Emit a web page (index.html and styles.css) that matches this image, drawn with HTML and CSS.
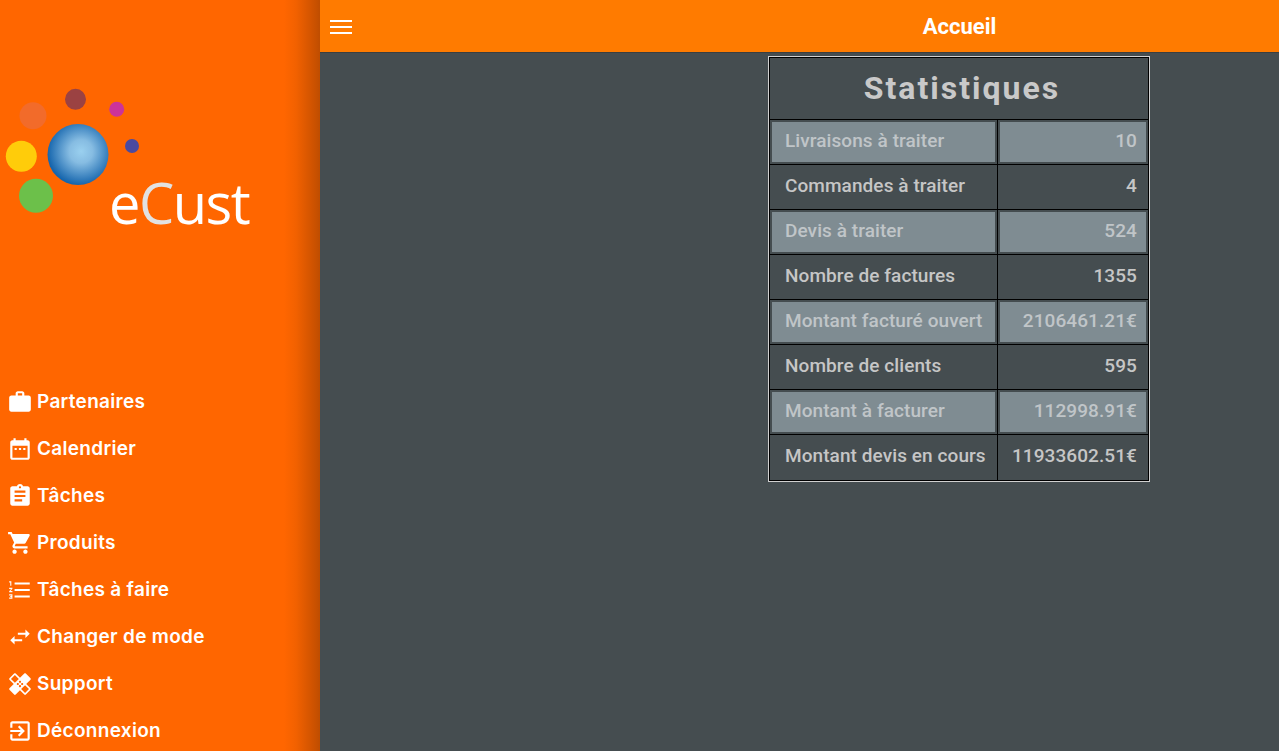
FILE: index.html
```html
<!DOCTYPE html>
<html lang="fr">
<head>
    <meta charset="UTF-8">
    <meta name="viewport" content="width=device-width, initial-scale=1.0">
    <title>eCust - Accueil</title>
    <link rel="stylesheet" href="styles.css">
</head>
<body>
    <aside class="sidebar">
        <div class="logo-wrap">
            <svg class="logo" width="320" height="377" viewBox="0 0 320 377">
                <defs>
                    <radialGradient id="ball" cx="0.55" cy="0.45" r="0.55">
                        <stop offset="0" stop-color="#9ad0ef"/>
                        <stop offset="0.35" stop-color="#86bce2"/>
                        <stop offset="1" stop-color="#1565ad"/>
                    </radialGradient>
                </defs>
                <circle cx="33" cy="115.7" r="13.5" fill="#f26b2a"/>
                <circle cx="75.5" cy="99.3" r="10.5" fill="#9b4242"/>
                <circle cx="116.7" cy="109.3" r="7.5" fill="#cc3399"/>
                <circle cx="132" cy="146" r="7" fill="#4a4aa0"/>
                <circle cx="78" cy="154.5" r="30.5" fill="url(#ball)"/>
                <circle cx="21.3" cy="156.3" r="15.5" fill="#ffcc0a"/>
                <circle cx="36" cy="195.7" r="17" fill="#6cc04a"/>
                <text class="logo-text" x="109" y="224">e<tspan class="logo-c">C</tspan>ust</text>
            </svg>
        </div>
        <nav class="menu">
            <a class="menu-item" href="#">
                <svg class="menu-icon" viewBox="0 0 24 24"><path d="M20 6h-4V4c0-1.11-.89-2-2-2h-4c-1.11 0-2 .89-2 2v2H4c-1.11 0-1.99.89-1.99 2L2 19c0 1.11.89 2 2 2h16c1.11 0 2-.89 2-2V8c0-1.11-.89-2-2-2zm-6 0h-4V4h4v2z"/></svg>
                Partenaires
            </a>
            <a class="menu-item" href="#">
                <svg class="menu-icon" viewBox="0 0 24 24"><path d="M9 11H7v2h2v-2zm4 0h-2v2h2v-2zm4 0h-2v2h2v-2zm2-7h-1V2h-2v2H8V2H6v2H5c-1.11 0-1.99.9-1.99 2L3 20c0 1.1.89 2 2 2h14c1.1 0 2-.9 2-2V6c0-1.1-.9-2-2-2zm0 16H5V9h14v11z"/></svg>
                Calendrier
            </a>
            <a class="menu-item" href="#">
                <svg class="menu-icon" viewBox="0 0 24 24"><path d="M19 3h-4.18C14.4 1.84 13.3 1 12 1c-1.3 0-2.4.84-2.82 2H5c-1.1 0-2 .9-2 2v14c0 1.1.9 2 2 2h14c1.1 0 2-.9 2-2V5c0-1.1-.9-2-2-2zm-7 0c.55 0 1 .45 1 1s-.45 1-1 1-1-.45-1-1 .45-1 1-1zm2 14H7v-2h7v2zm3-4H7v-2h10v2zm0-4H7V7h10v2z"/></svg>
                Tâches
            </a>
            <a class="menu-item" href="#">
                <svg class="menu-icon" viewBox="0 0 24 24"><path d="M7 18c-1.1 0-1.99.9-1.99 2S5.9 22 7 22s2-.9 2-2-.9-2-2-2zM1 2v2h2l3.6 7.59-1.35 2.45c-.16.28-.25.61-.25.96 0 1.1.9 2 2 2h12v-2H7.42c-.14 0-.25-.11-.25-.25l.03-.12.9-1.83h7.45c.75 0 1.41-.41 1.75-1.03l3.58-6.49c.08-.14.12-.31.12-.48 0-.55-.45-1-1-1H5.21l-.94-2H1zm16 16c-1.1 0-1.99.9-1.99 2s.89 2 1.99 2 2-.9 2-2-.9-2-2-2z"/></svg>
                Produits
            </a>
            <a class="menu-item" href="#">
                <svg class="menu-icon" viewBox="0 0 24 24"><path d="M2 17h2v.5H3v1h1v.5H2v1h3v-4H2v1zm1-9h1V4H2v1h1v3zm-1 3h1.8L2 13.1v.9h3v-1H3.2L5 10.9V10H2v1zm5-6v2h14V5H7zm0 14h14v-2H7v2zm0-6h14v-2H7v2z"/></svg>
                Tâches à faire
            </a>
            <a class="menu-item" href="#">
                <svg class="menu-icon" viewBox="0 0 24 24"><path d="M6.99 11L3 15l3.99 4v-3H14v-2H6.99v-3zM21 9l-4-4v3h-7v2h7v3l4-4z"/></svg>
                Changer de mode
            </a>
            <a class="menu-item" href="#">
                <svg class="menu-icon" viewBox="0 0 24 24"><path d="M17.73 12.02l3.98-3.98c.39-.39.39-1.02 0-1.41l-4.34-4.34c-.39-.39-1.02-.39-1.41 0l-3.98 3.98L8 2.29C7.8 2.1 7.55 2 7.29 2c-.25 0-.51.1-.7.29L2.25 6.63c-.39.39-.39 1.02 0 1.41l3.98 3.98L2.25 16c-.39.39-.39 1.02 0 1.41l4.34 4.34c.39.39 1.02.39 1.41 0l3.98-3.98 3.98 3.98c.2.2.45.29.71.29.26 0 .51-.1.71-.29l4.34-4.34c.39-.39.39-1.02 0-1.41l-3.99-3.98zM12 9c.55 0 1 .45 1 1s-.45 1-1 1-1-.45-1-1 .45-1 1-1zm-4.71 1.96L3.66 7.34l3.63-3.63 3.62 3.62-3.62 3.63zM10 13c-.55 0-1-.45-1-1s.45-1 1-1 1 .45 1 1-.45 1-1 1zm2 2c-.55 0-1-.45-1-1s.45-1 1-1 1 .45 1 1-.45 1-1 1zm2-4c.55 0 1 .45 1 1s-.45 1-1 1-1-.45-1-1 .45-1 1-1zm2.66 9.34l-3.63-3.62 3.63-3.63 3.62 3.62-3.62 3.63z"/></svg>
                Support
            </a>
            <a class="menu-item" href="#">
                <svg class="menu-icon" viewBox="0 0 24 24"><path d="M10.09 15.59L11.5 17l5-5-5-5-1.41 1.41L12.67 11H3v2h9.67l-2.58 2.59zM19 3H5c-1.11 0-2 .9-2 2v4h2V5h14v14H5v-4H3v4c0 1.1.89 2 2 2h14c1.1 0 2-.9 2-2V5c0-1.1-.9-2-2-2z"/></svg>
                Déconnexion
            </a>
        </nav>
    </aside>

    <div class="page">
        <header class="topbar">
            <button class="burger" aria-label="Menu">
                <span></span><span></span><span></span>
            </button>
            <h1>Accueil</h1>
        </header>
        <main class="content">
            <table class="stats">
                <caption>Statistiques</caption>
                <tr class="odd"><td class="label">Livraisons à traiter</td><td>10</td></tr>
                <tr><td class="label">Commandes à traiter</td><td>4</td></tr>
                <tr class="odd"><td class="label">Devis à traiter</td><td>524</td></tr>
                <tr><td class="label">Nombre de factures</td><td>1355</td></tr>
                <tr class="odd"><td class="label">Montant facturé ouvert</td><td>2106461.21€</td></tr>
                <tr><td class="label">Nombre de clients</td><td>595</td></tr>
                <tr class="odd"><td class="label">Montant à facturer</td><td>112998.91€</td></tr>
                <tr class="last"><td class="label">Montant devis en cours</td><td>11933602.51€</td></tr>
            </table>
        </main>
    </div>
</body>
</html>
```

FILE: styles.css
```css
html, body {
    height: 100%;
}

body {
    margin: 0;
    display: flex;
    overflow: hidden;
    background: #454d50;
    font-family: Roboto, Arial, sans-serif;
}

.sidebar {
    width: 320px;
    flex: none;
    height: 100vh;
    overflow: hidden;
    background: linear-gradient(90deg, #ff6600 0, #ff6600 284px, #f26100 296px, #d95700 308px, #bf4d00 320px);
}

.logo-wrap {
    height: 378px;
}

.logo {
    display: block;
}

.logo-text {
    font-family: "Open Sans", sans-serif;
    font-weight: 400;
    font-size: 56px;
    letter-spacing: -1.5px;
    fill: #fff;
}

.logo-c {
    fill: #e2e2e2;
}

.menu-item {
    display: flex;
    align-items: center;
    gap: 4px;
    height: 47px;
    padding-left: 7px;
    color: #fff;
    text-decoration: none;
    font-family: Inter, Arial, sans-serif;
    font-size: 19px;
    font-weight: 600;
    letter-spacing: 0.3px;
}

.menu-icon {
    width: 26px;
    height: 26px;
    fill: #fff;
    flex: none;
}

.page {
    flex: 1;
    min-width: 0;
}

.topbar {
    position: relative;
    height: 53px;
    display: flex;
    align-items: center;
    justify-content: center;
    padding-left: 320px;
    box-sizing: border-box;
    background: #ff7b00;
    border-bottom: 1px solid #3a3f41;
}

.topbar h1 {
    margin: 0;
    color: #fff;
    font-size: 22px;
    font-weight: 700;
}

.burger {
    position: absolute;
    left: 10px;
    top: 20px;
    width: 22px;
    padding: 0;
    border: none;
    background: none;
    display: grid;
    gap: 4px;
}

.burger span {
    height: 2px;
    background: #fff;
}

.content {
    padding: 4px 0 0 319px;
    display: flex;
    justify-content: center;
}

.stats {
    width: 380px;
    border-collapse: collapse;
    border: 1px solid #000;
    outline: 1px solid #d0d0d0;
    color: #c6c6c6;
    font-size: 19px;
    font-weight: 500;
    letter-spacing: 0.08px;
}

.stats caption {
    height: 62px;
    line-height: 60px;
    padding-left: 6px;
    box-sizing: border-box;
    font-size: 32px;
    font-weight: 700;
    letter-spacing: 2px;
    color: #c9c9c9;
    border: 1px solid #000;
    border-bottom: none;
}

.stats td {
    height: 40px;
    padding: 0 11px 4px 6px;
    border: 1px solid #000;
    white-space: nowrap;
    text-align: right;
}

.stats td.label {
    width: 226px;
    padding-left: 15px;
    text-align: left;
    box-sizing: border-box;
}

.stats .last td {
    height: 40px;
    padding-bottom: 5px;
}

.stats .odd td {
    background: #7f8c92;
    box-shadow: inset 0 0 0 2px #454d50;
    color: #c0c5c8;
}
```
